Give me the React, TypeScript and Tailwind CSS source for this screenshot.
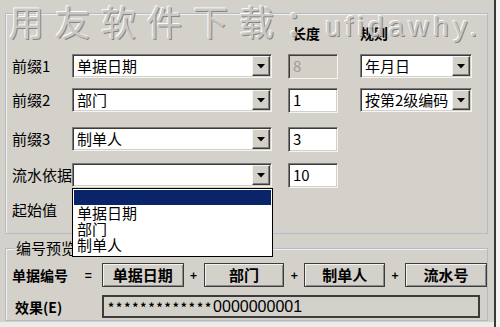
import React from 'react'

const font = "font-['Noto_Sans_CJK_SC','Noto_Sans',sans-serif]"
const sunken =
  'border border-t-[#7a7a7a] border-l-[#7a7a7a] border-r-[#f4f4f4] border-b-[#f4f4f4] shadow-[inset_1px_1px_0_#3c3c3c,inset_-1px_-1px_0_#d4d0c8]'
const raised =
  'border border-t-[#f4f4f4] border-l-[#f4f4f4] border-r-[#3c3c3c] border-b-[#3c3c3c] shadow-[inset_-1px_-1px_0_#808080] bg-[#d4d0c8]'

const Arrow = () => (
  <div className={`${raised} w-[18px] h-[20px] flex items-center justify-center shrink-0`}>
    <svg width="8" height="5" viewBox="0 0 8 5">
      <polygon points="0,0 8,0 4,4.5" fill="#000" />
    </svg>
  </div>
)

const Combo = ({ text, w }: { text: string; w: string }) => (
  <div className={`${sunken} ${w} h-[24px] bg-white flex items-center pr-[1px]`}>
    <span className="flex-1 min-w-0 pl-[4px] text-[15px] leading-[18px] whitespace-nowrap">{text}</span>
    <Arrow />
  </div>
)

const Field = ({ text, disabled }: { text: string; disabled?: boolean }) => (
  <div
    className={`${sunken} w-[50px] h-[25px] flex items-center pl-[4px] text-[15px] leading-[18px] ${
      disabled ? 'bg-[#d4d0c8] text-[#9a9a9a]' : 'bg-white text-black'
    }`}
  >
    {text}
  </div>
)

const Row = ({ label, combo, field, rule, disabled }: any) => (
  <div className="flex items-center h-[24px]">
    <span className="w-[66px] pl-[6px] text-[15px] leading-[18px] whitespace-nowrap">{label}</span>
    <Combo text={combo} w="w-[200px]" />
    <div className="ml-[16px]">
      <Field text={field} disabled={disabled} />
    </div>
    {rule && (
      <div className="ml-[22px]">
        <Combo text={rule} w="w-[112px]" />
      </div>
    )}
  </div>
)

const Part = ({ text, w }: { text: string; w: string }) => (
  <div
    className={`${w} h-[24px] border border-[#3c3c3c] shadow-[inset_1px_1px_0_#f2f2f2,inset_-1px_-1px_0_#8a8a8a] flex items-center justify-center text-[15px] font-bold leading-[18px]`}
  >
    {text}
  </div>
)

const Plus = () => <span className="w-[20px] text-center text-[12px] font-bold">+</span>

export default function App() {
  return (
    <div className={`${font} relative w-[500px] h-[327px] overflow-hidden bg-white flex text-black`}>
      <div className="w-[494px] h-full bg-[#d4d1cb] flex flex-col px-[5px] pt-[13px]">
        {/* upper group */}
        <div className="w-[483px] h-[221px] border border-[#b4bac6] shadow-[inset_1px_1px_0_#f0f0f0] flex flex-col">
          <div className="h-[18px] mt-[10px] flex items-center text-[14px] font-bold leading-[18px]">
            <span className="ml-[286px]">长度</span>
            <span className="ml-[40px]">规则</span>
          </div>
          <div className="mt-[12px]">
            <Row label="前缀1" combo="单据日期" field="8" rule="年月日" disabled />
          </div>
          <div className="mt-[10px]">
            <Row label="前缀2" combo="部门" field="1" rule="按第2级编码" />
          </div>
          <div className="mt-[15px]">
            <Row label="前缀3" combo="制单人" field="3" />
          </div>
          <div className="mt-[12px]">
            <Row label="流水依据" combo="" field="10" />
          </div>
          <div className="mt-[14px] h-[18px] flex items-center pl-[6px] text-[15px] leading-[18px]">起始值</div>
        </div>

        {/* lower group */}
        <div className="mt-[14px] w-[483px] h-[73px] border border-[#b4bac6] shadow-[inset_1px_1px_0_#f0f0f0] flex flex-col">
          <span className="-mt-[9px] ml-[9px] px-[1px] w-fit bg-[#d4d1cb] text-[15px] leading-[16px]">编号预览</span>
          <div className="mt-[7px] flex items-center h-[24px]">
            <span className="w-[69px] pl-[6px] text-[14px] font-bold leading-[18px] whitespace-nowrap">单据编号</span>
            <span className="w-[27px] text-center text-[12px] font-bold">=</span>
            <Part text="单据日期" w="w-[82px]" />
            <Plus />
            <Part text="部门" w="w-[81px]" />
            <Plus />
            <Part text="制单人" w="w-[81px]" />
            <Plus />
            <Part text="流水号" w="w-[82px]" />
          </div>
          <div className="mt-[8px] flex items-center h-[23px]">
            <span className="w-[96px] pl-[9px] text-[14px] font-bold leading-[18px]">效果(E)</span>
            <div className="w-[378px] h-[23px] border-2 border-[#3c3c3c] flex items-center pl-[4px] leading-[18px]">
              <span className="text-[12px] font-bold tracking-[2px]">*************</span>
              <span className="font-['Liberation_Sans',sans-serif] text-[16px]">0000000001</span>
            </div>
          </div>
        </div>
        <div className="flex-1 -mx-[5px] mt-[1px] bg-[#ecebe8]" />
      </div>
      <div className="w-[2px] h-full bg-[#3a3a3a]" />
      <div className="flex-1 h-full bg-[#f4f4f4]" />

      {/* open dropdown list of 流水依据 */}
      <div className="absolute left-[72px] top-[188px] w-[201px] h-[69px] bg-white border border-black flex flex-col pt-[1px] px-[1px] text-[15px] leading-[16px]">
        <div className="h-[15px] bg-[#0a246a]" />
        <span className="pl-[3px]">单据日期</span>
        <span className="pl-[3px]">部门</span>
        <span className="pl-[3px]">制单人</span>
      </div>

      {/* watermark */}
      <div className="absolute left-[9px] top-[3px] flex items-baseline whitespace-nowrap pointer-events-none text-[#c9c7c3] [text-shadow:1px_1px_0_#7e7e7e,-1px_-1px_0_#ffffff] opacity-90">
        <span className="text-[35px] leading-none tracking-[11px]">用友软件下载：</span>
        <span className="-ml-[6px] font-['Liberation_Sans',sans-serif] text-[28px] leading-none tracking-[4.5px]">ufidawhy.</span>
      </div>
    </div>
  )
}
